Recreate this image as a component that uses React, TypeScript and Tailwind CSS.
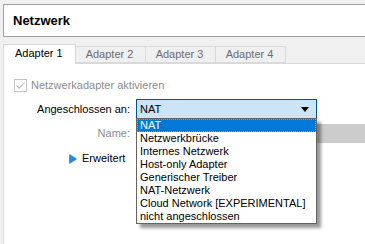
const items = [
  'NAT',
  'Netzwerkbrücke',
  'Internes Netzwerk',
  'Host-only Adapter',
  'Generischer Treiber',
  'NAT-Netzwerk',
  'Cloud Network [EXPERIMENTAL]',
  'nicht angeschlossen',
];

const tabs = ['Adapter 1', 'Adapter 2', 'Adapter 3', 'Adapter 4'];

export default function App() {
  return (
    <div className="relative w-[365px] h-[244px] overflow-hidden bg-[#f0f0f0] font-['Liberation_Sans',Tahoma,sans-serif] text-[11px] leading-[13px] text-black">
      {/* Header */}
      <div className="pt-[4px] pl-[3px]">
        <div className="h-[33px] w-[380px] border border-[#a0a0a0] bg-white flex items-center pl-[9px] text-[13px] font-bold">
          Netzwerk
        </div>
      </div>

      {/* Tabs */}
      <div className="pl-[3px] pt-[7px]">
        <div className="flex items-end h-[19px] relative z-10">
          {tabs.map((t, i) =>
            i === 0 ? (
              <div
                key={t}
                className="h-[19px] w-[73px] border border-b-0 border-[#d9d9d9] bg-white pl-[11px] pt-[2px] -mb-px h-[20px]"
              >
                {t}
              </div>
            ) : (
              <div
                key={t}
                className="h-[17px] w-[70px] border border-l-0 border-[#d9d9d9] bg-[#f0f0f0] text-[#6d6d6d] flex items-center justify-center pr-[2px]"
              >
                {t}
              </div>
            )
          )}
        </div>

        {/* Panel */}
        <div className="h-[200px] bg-white border-l border-t border-[#d9d9d9] pt-[15px]">
          <div className="flex items-center pl-[10px] h-[13px]">
            <div className="w-[13px] h-[13px] border border-[#c4c4c4] bg-white flex items-center justify-center">
              <svg width="11" height="11" viewBox="0 0 11 11">
                <path d="M1.5 5.5 L4.2 8.2 L9.5 2.5" fill="none" stroke="#bcbcbc" strokeWidth="1.1" />
              </svg>
            </div>
            <span className="ml-[4px] text-[#8c8c8c]">Netzwerkadapter aktivieren</span>
          </div>

          <div className="flex items-center mt-[7px] h-[20px]">
            <div className="w-[126px] text-right">Angeschlossen an:</div>
            <div className="ml-[6px] w-[181px] h-[20px] border border-[#005499] bg-[#cce4f7] flex items-center pl-[3px] pr-[7px]">
              <span className="flex-1">NAT</span>
              <svg width="8" height="5" viewBox="0 0 8 5">
                <path d="M0 0 H8 L4 5 Z" fill="#000" />
              </svg>
            </div>
          </div>

          <div className="flex items-center mt-[5px] h-[19px]">
            <div className="w-[126px] text-right text-[#8c8c8c]">Name:</div>
            <div className="ml-[6px] flex-1 h-[19px] bg-[#cccccc]" />
          </div>

          <div className="flex items-center mt-[9px] h-[13px] pl-[65px]">
            <svg width="8" height="10" viewBox="0 0 8 10">
              <path d="M0.5 0.5 L7.5 5 L0.5 9.5 Z" fill="#1e8ce6" stroke="#1579c9" strokeWidth="0.6" />
            </svg>
            <span className="ml-[5px]">Erweitert</span>
          </div>
        </div>
      </div>

      {/* Dropdown list */}
      <div className="absolute left-[136px] top-[118px] w-[181px] border border-[#646464] bg-white shadow-[4px_4px_3px_rgba(0,0,0,0.4)]">
        {items.map((it, i) =>
          i === 0 ? (
            <div
              key={it}
              className="h-[13px] bg-[#0078d7] text-white pl-[2px] border border-dotted border-[#f08c28] leading-[11px]"
            >
              {it}
            </div>
          ) : (
            <div key={it} className="h-[13px] pl-[3px]">
              {it}
            </div>
          )
        )}
      </div>
    </div>
  );
}
